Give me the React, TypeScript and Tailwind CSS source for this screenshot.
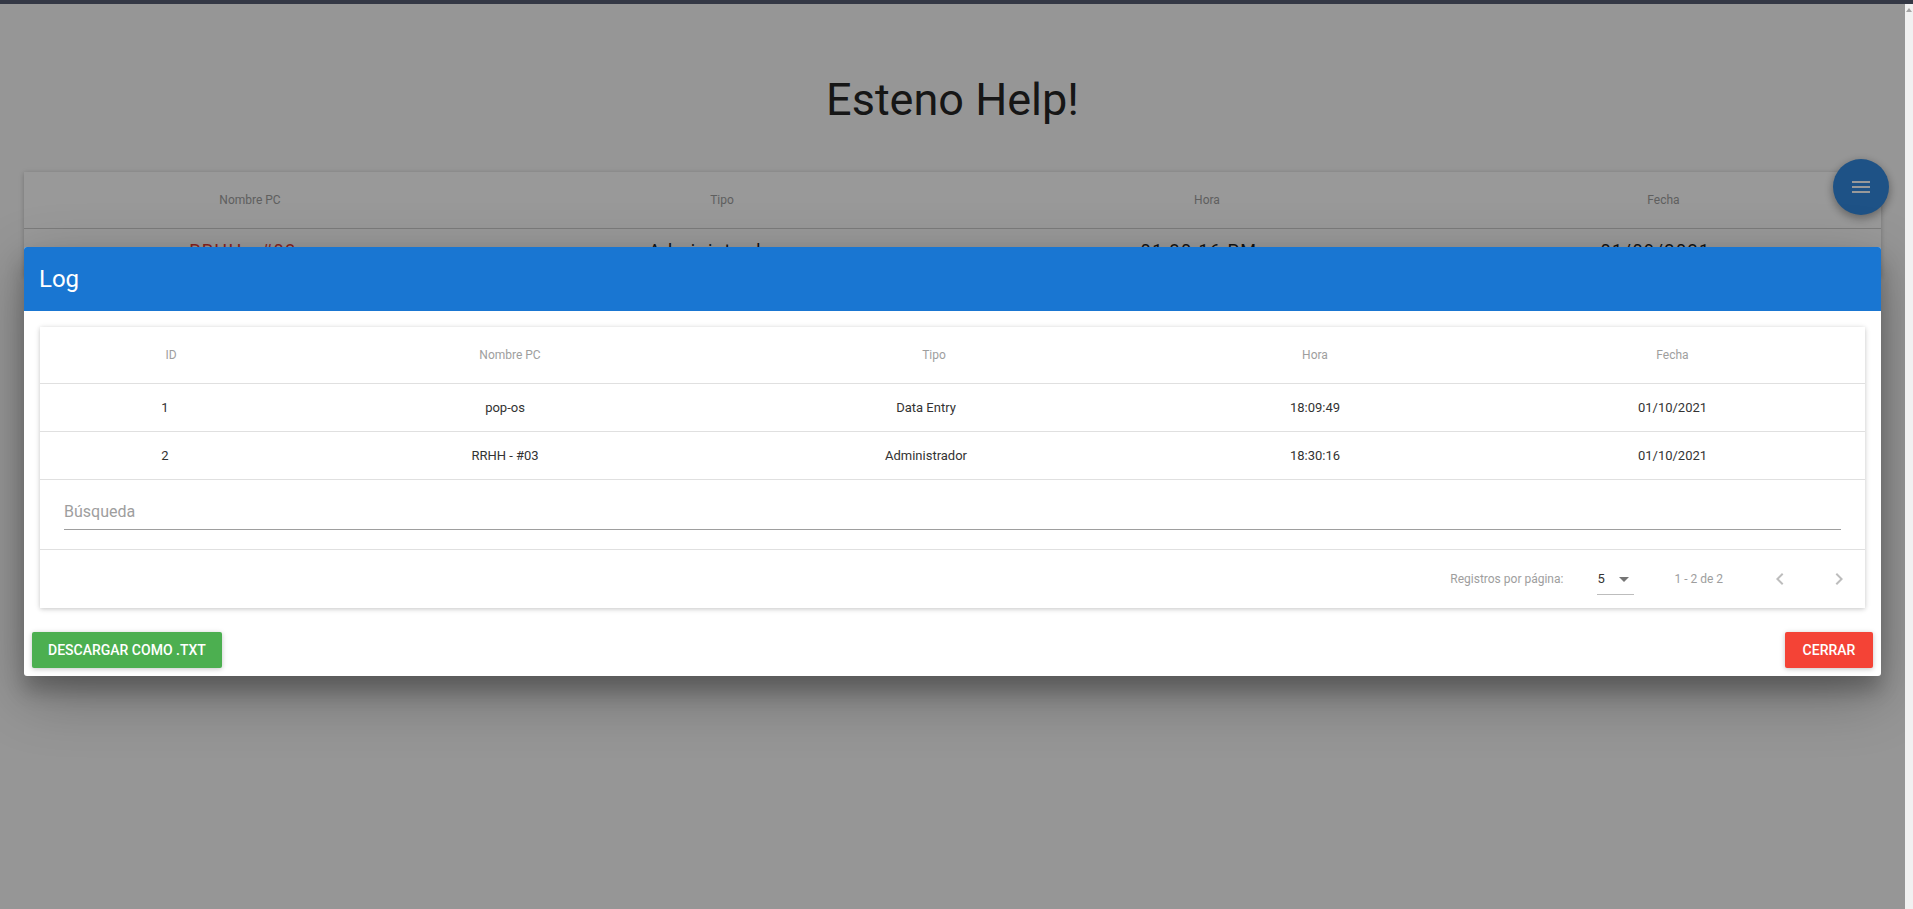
import React from "react";

const dlgCols = "grid grid-cols-[262px_416px_432px_330px_1fr]";
const bgCols = "grid grid-cols-[452px_492px_478px_1fr]";

const rows = [
  { id: "1", pc: "pop-os", tipo: "Data Entry", hora: "18:09:49", fecha: "01/10/2021" },
  { id: "2", pc: "RRHH - #03", tipo: "Administrador", hora: "18:30:16", fecha: "01/10/2021" },
];

function Chevron({ dir }: { dir: "left" | "right" }) {
  return (
    <svg width="24" height="24" viewBox="0 0 24 24" fill="#bdbdbd">
      {dir === "left" ? (
        <path d="M15.41 7.41 14 6l-6 6 6 6 1.41-1.41L10.83 12z" />
      ) : (
        <path d="M10 6 8.59 7.41 13.17 12l-4.58 4.59L10 18l6-6z" />
      )}
    </svg>
  );
}

export default function App() {
  return (
    <div className="relative flex h-[909px] w-full overflow-hidden font-['Roboto','Liberation_Sans',sans-serif]">
      <div className="relative flex-1 bg-[#fafafa]">
        {/* Underlying page */}
        <h1 className="mt-[74px] text-center text-[45px] leading-[52px] font-normal text-[#262626]">
          Esteno Help!
        </h1>
        <div className="mx-[24px] mt-[46px] bg-white shadow-[0_1px_6px_rgba(0,0,0,0.12),0_1px_4px_rgba(0,0,0,0.12)]">
          <div className={`${bgCols} h-[57px] items-center border-b border-[#cfcfcf] text-[12px] text-[#9e9e9e]`}>
            <div className="text-center">Nombre PC</div>
            <div className="text-center">Tipo</div>
            <div className="text-center">Hora</div>
            <div className="text-center">Fecha</div>
          </div>
          <div className={`${bgCols} pt-[10px] pb-[14px] text-[18px] leading-[24px] tracking-[0.08em] text-[#212121]`}>
            <div className="pr-[14px] text-center text-[#e53935]">RRHH - #03</div>
            <div className="pr-[14px] text-center">Administrador</div>
            <div className="pr-[16px] text-center">01:30:16 PM</div>
            <div className="pr-[16px] text-center">01/09/2021</div>
          </div>
        </div>

        {/* Floating action button */}
        <button className="absolute left-[1833px] top-[159px] flex h-[56px] w-[56px] items-center justify-center rounded-full bg-[#3289df] shadow-[0_3px_10px_rgba(0,0,0,0.16),0_3px_10px_rgba(0,0,0,0.23)]">
          <svg width="24" height="24" viewBox="0 0 24 24" fill="white">
            <path d="M3 18h18v-2H3v2zm0-5h18v-2H3v2zm0-7v2h18V6H3z" />
          </svg>
        </button>

        {/* Backdrop */}
        <div className="absolute inset-0 bg-black/40" />

        {/* Dialog */}
        <div className="absolute left-[24px] right-[24px] top-[247px] overflow-hidden rounded-[3px] bg-white shadow-[0_19px_60px_rgba(0,0,0,0.3),0_15px_20px_rgba(0,0,0,0.22)]">
          <div className="flex h-[64px] items-center bg-[#1976d2] px-[15px] text-[24px] text-white">Log</div>
          <div className="px-[16px] pt-[16px] pb-[16px]">
            <div className="bg-white shadow-[0_1px_6px_rgba(0,0,0,0.12),0_1px_4px_rgba(0,0,0,0.12)]">
              <div className={`${dlgCols} h-[57px] items-center border-b border-[#e0e0e0] text-[12px] text-[#9e9e9e]`}>
                <div className="text-center">ID</div>
                <div className="text-center">Nombre PC</div>
                <div className="text-center">Tipo</div>
                <div className="text-center">Hora</div>
                <div className="text-center">Fecha</div>
              </div>
              {rows.map((r) => (
                <div
                  key={r.id}
                  className={`${dlgCols} h-[48px] items-center border-b border-[#e0e0e0] text-[13px] text-[#333333]`}
                >
                  <div className="pr-[12px] text-center">{r.id}</div>
                  <div className="pr-[10px] text-center">{r.pc}</div>
                  <div className="pr-[16px] text-center">{r.tipo}</div>
                  <div className="text-center">{r.hora}</div>
                  <div className="text-center">{r.fecha}</div>
                </div>
              ))}
              <div className="h-[69px] px-[24px] pt-[20px]">
                <div className="text-[16px] leading-[24px] text-[#9e9e9e]">Búsqueda</div>
                <div className="mt-[5px] border-b border-[#9e9e9e]" />
              </div>
              <div className="flex h-[59px] items-center justify-end border-t border-[#e0e0e0] pr-[2px] text-[12px] text-[#9e9e9e]">
                <span>Registros por página:</span>
                <div className="ml-[34px] flex h-[32px] w-[37px] items-center border-b border-[#bdbdbd] pt-[1px] text-[13px] text-[#333333]">
                  <span>5</span>
                  <svg className="ml-[14px]" width="10" height="5" viewBox="0 0 10 5" fill="#757575">
                    <path d="M0 0h10L5 5z" />
                  </svg>
                </div>
                <span className="ml-[40px]">1 - 2 de 2</span>
                <div className="ml-[33px] flex gap-[11px]">
                  <div className="flex h-[48px] w-[48px] items-center justify-center">
                    <Chevron dir="left" />
                  </div>
                  <div className="flex h-[48px] w-[48px] items-center justify-center">
                    <Chevron dir="right" />
                  </div>
                </div>
              </div>
            </div>
          </div>
          <div className="flex items-center justify-between px-[8px] pt-[8px] pb-[8px]">
            <button className="h-[36px] rounded-[2px] bg-[#4caf50] px-[16px] text-[14px] font-medium uppercase text-white shadow-[0_1px_6px_rgba(0,0,0,0.12),0_1px_4px_rgba(0,0,0,0.12)]">
              Descargar como .txt
            </button>
            <button className="h-[36px] min-w-[88px] rounded-[2px] bg-[#f44336] px-[16px] text-[14px] font-medium uppercase text-white shadow-[0_1px_6px_rgba(0,0,0,0.12),0_1px_4px_rgba(0,0,0,0.12)]">
              Cerrar
            </button>
          </div>
        </div>
      </div>

      {/* Scrollbar strip */}
      <div className="relative w-[8px] bg-[#f1f1f1]">
        <div className="mx-auto mt-[8px] h-0 w-0 border-x-[3px] border-b-[4px] border-x-transparent border-b-[#a3a3a3]" />
      </div>

      {/* Top bar */}
      <div className="absolute inset-x-0 top-0 h-[4px] bg-[#343845]" />
    </div>
  );
}
